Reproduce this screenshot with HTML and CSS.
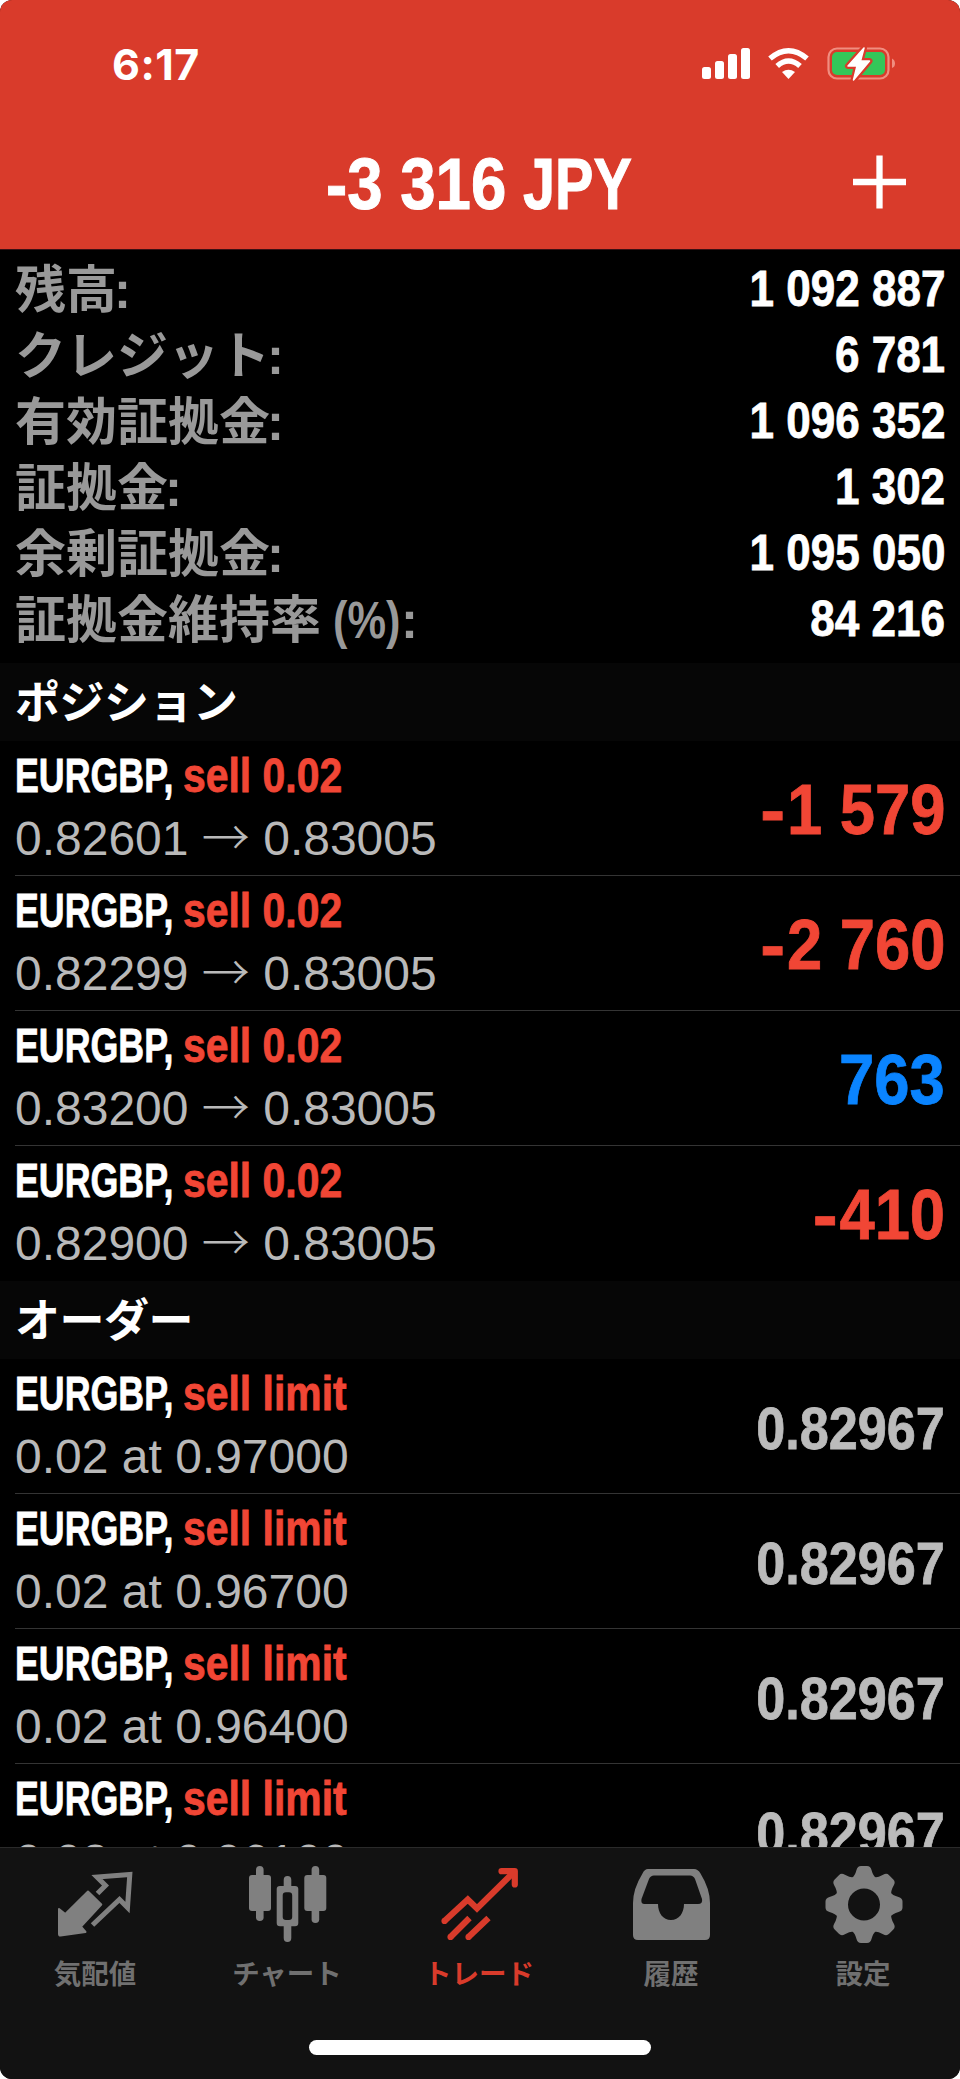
FILE: index.html
```
<!DOCTYPE html>
<html lang="ja">
<head>
<meta charset="utf-8">
<title>トレード</title>
<link rel="stylesheet" href="styles.css">
</head>
<body>
<div class="app">
  <header class="top">
    <div class="status">
      <span class="clock">6:17</span>
      <svg class="status-icons" viewBox="0 0 194 36" width="194" height="36">
        <g fill="#fff">
          <rect x="0" y="21" width="9" height="12" rx="2.5"/><rect x="13" y="15" width="9" height="18" rx="2.5"/><rect x="26" y="8" width="9" height="25" rx="2.5"/><rect x="39" y="2" width="9" height="31" rx="2.5"/>
          <path d="M86.500 33 L80 26 Q86.500 21.500 93 26Z"/>
        </g>
        <g fill="none" stroke="#fff" stroke-width="5.500">
          <path d="M68 12.500 Q86.500 -3 105 12.500"/><path d="M75.200 20 Q86.500 10 98 20"/>
        </g>
        <rect x="126.500" y="2.500" width="60" height="30" rx="8.500" fill="none" stroke="#f08e80" stroke-width="2.200"/>
        <path d="M190 12.500 Q193 14 193 17.500 Q193 21 190 22Z" fill="#f08e80"/>
        <rect x="130" y="6" width="53" height="23" rx="5" fill="#34c759"/>
        <path d="M162 2 L146 20 H155 L151.500 34 L167.500 15 H158.500Z" fill="#d93b2b" stroke="#d93b2b" stroke-width="6" stroke-linejoin="round"/>
        <path d="M162 2 L146 20 H155 L151.500 34 L167.500 15 H158.500Z" fill="#fff" stroke="#fff" stroke-width="1.500" stroke-linejoin="round"/>
      </svg>
    </div>
    <div class="nav">
      <h1 class="total"><span class="amount">-3 316</span> <span class="currency">JPY</span></h1>
      <svg class="plus" viewBox="0 0 54 54" width="54" height="54"><path d="M0 27H53M26.500 0.500V53.500" stroke="#fff" stroke-width="6.300"/></svg>
    </div>
  </header>

  <main class="content">
    <dl class="summary">
      <div class="line"><dt>残高<i>:</i></dt><dd>1 092 887</dd></div>
      <div class="line"><dt>クレジット<i>:</i></dt><dd>6 781</dd></div>
      <div class="line"><dt>有効証拠金<i>:</i></dt><dd>1 096 352</dd></div>
      <div class="line"><dt>証拠金<i>:</i></dt><dd>1 302</dd></div>
      <div class="line"><dt>余剰証拠金<i>:</i></dt><dd>1 095 050</dd></div>
      <div class="line"><dt>証拠金維持率 <b>(%)</b><i>:</i></dt><dd>84 216</dd></div>
    </dl>

    <h2 class="section">ポジション</h2>
    <ul class="rows">
      <li class="row"><div class="info"><p class="name"><span class="sym">EURGBP,</span><span class="side">sell 0.02</span></p><p class="detail">0.82601 <span class="to">→</span> 0.83005</p></div><span class="profit loss"><i>-</i>1 579</span></li>
      <li class="row"><div class="info"><p class="name"><span class="sym">EURGBP,</span><span class="side">sell 0.02</span></p><p class="detail">0.82299 <span class="to">→</span> 0.83005</p></div><span class="profit loss"><i>-</i>2 760</span></li>
      <li class="row"><div class="info"><p class="name"><span class="sym">EURGBP,</span><span class="side">sell 0.02</span></p><p class="detail">0.83200 <span class="to">→</span> 0.83005</p></div><span class="profit gain">763</span></li>
      <li class="row"><div class="info"><p class="name"><span class="sym">EURGBP,</span><span class="side">sell 0.02</span></p><p class="detail">0.82900 <span class="to">→</span> 0.83005</p></div><span class="profit loss"><i>-</i>410</span></li>
    </ul>

    <h2 class="section">オーダー</h2>
    <ul class="rows">
      <li class="row"><div class="info"><p class="name"><span class="sym">EURGBP,</span><span class="side">sell limit</span></p><p class="detail">0.02 at 0.97000</p></div><span class="price">0.82967</span></li>
      <li class="row"><div class="info"><p class="name"><span class="sym">EURGBP,</span><span class="side">sell limit</span></p><p class="detail">0.02 at 0.96700</p></div><span class="price">0.82967</span></li>
      <li class="row"><div class="info"><p class="name"><span class="sym">EURGBP,</span><span class="side">sell limit</span></p><p class="detail">0.02 at 0.96400</p></div><span class="price">0.82967</span></li>
      <li class="row"><div class="info"><p class="name"><span class="sym">EURGBP,</span><span class="side">sell limit</span></p><p class="detail">0.02 at 0.96100</p></div><span class="price">0.82967</span></li>
    </ul>
  </main>

  <footer class="bottom">
    <nav class="tabs">
      <a class="tab">
        <svg viewBox="0 0 80 80" width="80" height="80">
          <path d="M32 24.500 L45.300 37.500 L25 59.700 L29.500 65 L4.500 68.500 Q3 68.700 3 67 V42 L9.300 47Z" fill="#808080" stroke="#808080" stroke-width="2" stroke-linejoin="round"/>
          <path d="M41.500 26.500 L49.500 18.500 L41 10 L73.800 7.500 L71.500 40.500 L63.500 32.500 L36.500 58" fill="none" stroke="#808080" stroke-width="5"/>
        </svg>
        <span>気配値</span>
      </a>
      <a class="tab">
        <svg viewBox="0 0 80 80" width="80" height="80" fill="#808080">
          <rect x="1" y="8" width="22" height="36" rx="3"/><rect x="8" y="-1" width="7.600" height="55" rx="3.800"/>
          <rect x="56.300" y="8" width="22" height="36" rx="3"/><rect x="63.600" y="-1" width="7.600" height="57" rx="3.800"/>
          <path d="M35.700 24 V13 Q35.700 9 39.500 9 Q43.300 9 43.300 13 V24Z M35.700 56 V71 Q35.700 75 39.500 75 Q43.300 75 43.300 71 V56Z"/>
          <path fill-rule="evenodd" d="M32 19 H47 Q50.300 19 50.300 22 V56 Q50.300 59.300 47 59.300 H32 Q28.700 59.300 28.700 56 V22 Q28.700 19 32 19Z M38 25.300 Q34.700 25.300 34.700 28.500 V50 Q34.700 53 38 53 H41 Q44.200 53 44.200 50 V28.500 Q44.200 25.300 41 25.300Z"/>
        </svg>
        <span>チャート</span>
      </a>
      <a class="tab active">
        <svg viewBox="0 0 80 80" width="80" height="80" fill="none" stroke="#d93b2b" stroke-width="6.200">
          <path d="M4.500 54 L27.800 32.500 L37 41.500 L74.500 4.500" stroke-linejoin="miter"/>
          <path d="M61.500 4.200 H74.800 V17.500" stroke-linecap="round" stroke-linejoin="round"/>
          <path d="M10.500 70 L29.500 51 M28.500 70 L48.500 51"/>
          <path d="M4.500 54h.01M10.500 70h.01M28.500 70h.01" stroke-linecap="round"/>
        </svg>
        <span>トレード</span>
      </a>
      <a class="tab">
        <svg viewBox="0 0 80 80" width="80" height="80">
          <path fill="#808080" fill-rule="evenodd" d="M16 2 H62 Q66 2 68.500 6.500 Q78 22 78 36 V68 Q78 73 73 73 H6 Q1 73 1 68 V36 Q1 22 10.500 6.500 Q12.500 2 16 2Z M22 8.500 Q18.500 8.500 17 12 L9.500 32 Q8.500 37 12.500 37 H26 C26 46 31 53 39 53 C47 53 52 46 52 37 H66 Q71 37 70 32 L63 12 Q61.500 8.500 58 8.500Z"/>
        </svg>
        <span>履歴</span>
      </a>
      <a class="tab">
        <svg viewBox="0 0 80 80" width="80" height="80">
          <g fill="#808080">
            <path id="tooth" d="M27 12 Q31 9 32.500 3 Q33.500 -1 37 -1 H43 Q46.500 -1 47.500 3 Q49 9 53 12 L50 20 H30Z"/>
            <use href="#tooth" transform="rotate(45 40 37.500)"/><use href="#tooth" transform="rotate(90 40 37.500)"/><use href="#tooth" transform="rotate(135 40 37.500)"/><use href="#tooth" transform="rotate(180 40 37.500)"/><use href="#tooth" transform="rotate(225 40 37.500)"/><use href="#tooth" transform="rotate(270 40 37.500)"/><use href="#tooth" transform="rotate(315 40 37.500)"/>
          </g>
          <circle cx="40" cy="37.500" r="22.500" fill="none" stroke="#808080" stroke-width="13"/>
        </svg>
        <span>設定</span>
      </a>
    </nav>
    <div class="home"></div>
  </footer>
</div>
</body>
</html>
```
FILE: styles.css
```
* { box-sizing: border-box; margin: 0; padding: 0; }
html, body { background: #fff; }
body { font-family: "Liberation Sans", "Noto Sans CJK JP", sans-serif; color: #fff; }
.app { width: 960px; height: 2079px; background: #000; border-radius: 12px; overflow: hidden; display: flex; flex-direction: column; }

.top { flex: none; height: 250px; background: #d93b2b; border-bottom: 1px solid #3c1014; }
.status { display: flex; justify-content: space-between; height: 120px; padding: 46px 64px 0 112px; }
.clock { font: 700 43px/36px Inter, sans-serif; letter-spacing: .5px; }
.status-icons { overflow: visible; flex: none; }
.nav { display: grid; grid-template-columns: 1fr 54px; padding: 24px 53px 0 107px; }
.total { display: flex; justify-content: center; font-size: 72px; line-height: 80px; font-weight: 700; white-space: nowrap; -webkit-text-stroke: 1px currentColor; }
.amount { width: 197px; transform: scaleX(.883); transform-origin: left; }
.currency { width: 112px; transform: scaleX(.8); transform-origin: left; }
.plus { margin-top: 11px; }

.content { flex: 1; min-height: 0; overflow: hidden; }
.summary { height: 413px; padding: 3px 15px 0; }
.line { display: flex; justify-content: space-between; height: 66px; white-space: nowrap; }
.line dt { font: 700 51px/66px "Noto Sans CJK JP", sans-serif; color: #999; }
.line i, .line b { font-family: "Liberation Sans", sans-serif; font-style: normal; display: inline-block; }
.line i { margin-left: -3px; }
.line b { transform: scaleX(.85); transform-origin: left; margin-right: -8px; font-weight: 700; }
.line dd { font-size: 50px; line-height: 73px; font-weight: 700; transform: scaleX(.881); transform-origin: right; -webkit-text-stroke: .8px currentColor; }

.section { height: 78px; background: #060606; padding-left: 15px; font: 700 45px/74px "Noto Sans CJK JP", sans-serif; letter-spacing: -.5px; }
.rows { list-style: none; }
.row { display: flex; justify-content: space-between; height: 135px; margin-left: 15px; padding-right: 15px; border-bottom: 1px solid #343434; white-space: nowrap; }
.rows .row:last-child { border-bottom: 0; }
.info { padding-top: 6px; }
.name { display: flex; font-size: 48px; line-height: 58px; font-weight: 700; -webkit-text-stroke: .8px currentColor; }
.sym { width: 168px; transform: scaleX(.745); transform-origin: left; }
.side { color: #f14635; transform: scaleX(.852); transform-origin: left; }
.detail { font-size: 48px; line-height: 68px; color: #b9b9b9; }
.to { display: inline-block; width: 48px; line-height: 58px; font-family: "Noto Sans CJK JP", sans-serif; font-weight: 300; }
.profit { font-size: 70px; line-height: 139px; font-weight: 700; transform: scaleX(.905); transform-origin: right; -webkit-text-stroke: .8px currentColor; }
.profit i { display: inline-block; font-style: normal; margin-right: 4px; transform: scaleX(1.18); }
.loss { color: #f14635; }
.gain { color: #0a84ff; }
.price { font-size: 60px; line-height: 140px; font-weight: 700; color: #bbb; transform: scaleX(.87); transform-origin: right; -webkit-text-stroke: .8px currentColor; }

.bottom { flex: none; height: 232px; background: #121212; border-top: 1px solid #2a2a2a; display: flex; flex-direction: column; align-items: center; }
.tabs { display: grid; grid-template-columns: repeat(5, 1fr); width: 960px; height: 192px; padding-top: 19px; }
.tab { display: flex; flex-direction: column; align-items: center; color: #707070; font: 700 27.500px/36px "Noto Sans CJK JP", sans-serif; }
.tab svg { overflow: visible; }
.tab span { margin: 7px 2px 0 0; }
.tab.active { color: #d93b2b; }
.home { width: 342px; height: 15px; border-radius: 8px; background: #fff; }
```
